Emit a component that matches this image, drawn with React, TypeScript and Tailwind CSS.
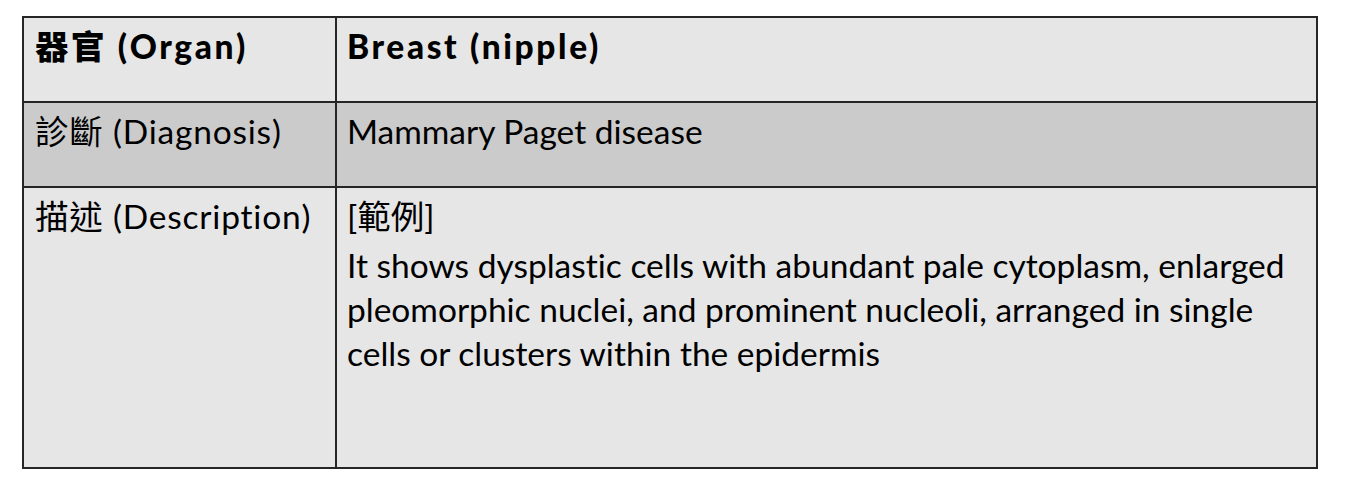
const rows = [
  {
    label: '器官 (Organ)',
    value: 'Breast (nipple)',
    bold: true,
    bg: 'bg-[#e6e6e6]',
    h: 'h-[85px]',
  },
  {
    label: '診斷 (Diagnosis)',
    value: 'Mammary Paget disease',
    bold: false,
    bg: 'bg-[#cbcbcb]',
    h: 'h-[85px]',
  },
];

export default function App() {
  return (
    <div className="min-h-screen bg-white pl-[22px] pt-[16px] text-black font-['Gill_Sans','Lato','Noto_Sans_CJK_TC',sans-serif] [font-variant-ligatures:none]">
      <div className="w-[1296px] border-2 border-[#262626] grid grid-cols-[313px_1fr] text-[33.5px] leading-[44px]">
        {rows.map((row) => (
          <div key={row.label} className="contents">
            <div className={`${row.bg} ${row.h} border-r-2 border-b-2 border-[#262626] pl-[11px] pt-[6px] ${row.bold ? 'font-black tracking-[2.6px]' : 'tracking-[0.8px]'}`}>
              {row.label}
            </div>
            <div className={`${row.bg} ${row.h} border-b-2 border-[#262626] pl-[10px] pt-[6px] ${row.bold ? 'font-black tracking-[2.6px]' : ''}`}>
              {row.value}
            </div>
          </div>
        ))}

        {/* Description row */}
        <div className="bg-[#e6e6e6] h-[279px] border-r-2 border-[#262626] pl-[11px] pt-[6px] tracking-[0.8px]">
          描述 (Description)
        </div>
        <div className="bg-[#e6e6e6] h-[279px] pl-[10px] pt-[6px] pr-[20px]">
          <p className="mb-[5px]">[範例]</p>
          <p>
            It shows dysplastic cells with abundant pale cytoplasm, enlarged pleomorphic nuclei, and prominent
            nucleoli, arranged in single cells or clusters within the epidermis
          </p>
        </div>
      </div>
    </div>
  );
}
